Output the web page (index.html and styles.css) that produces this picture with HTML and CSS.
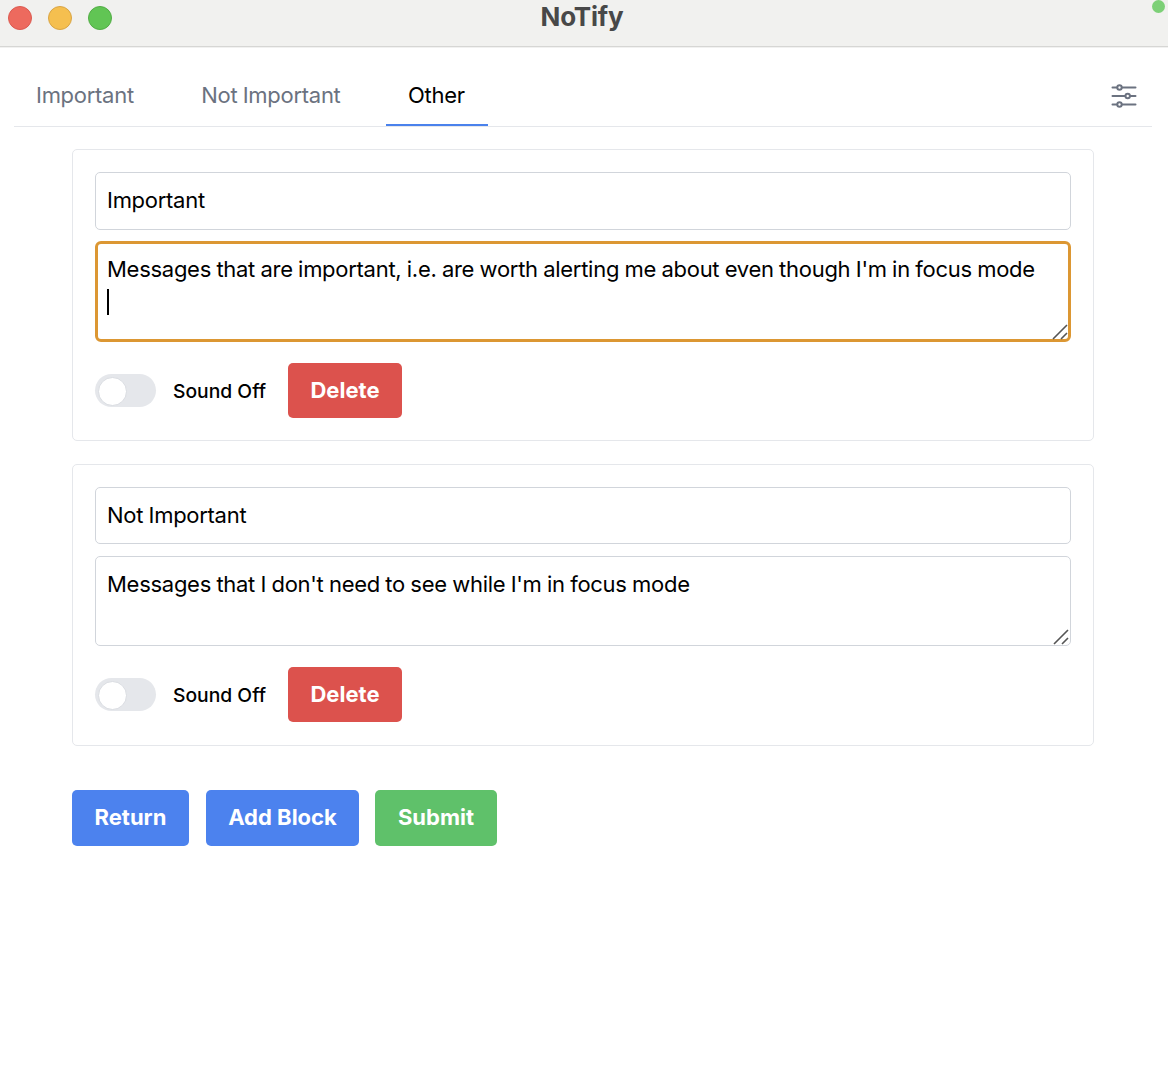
FILE: index.html
```html
<!DOCTYPE html>
<html lang="en">
<head>
<meta charset="utf-8">
<title>NoTify</title>
<link rel="stylesheet" href="styles.css">
</head>
<body>
<header class="titlebar">
  <div class="lights"><span class="light red"></span><span class="light yellow"></span><span class="light green"></span></div>
  <h1 class="title">NoTify</h1>
  <span class="status"></span>
</header>
<nav class="tabs">
  <a class="tab">Important</a>
  <a class="tab">Not Important</a>
  <a class="tab active">Other</a>
  <svg class="settings" viewBox="0 0 26 24" fill="none" stroke="#6b7280" stroke-width="2" stroke-linecap="round"><path d="M1.500 3.500h4.500M11 3.500h13.500M1.500 12h12.500M19 12h5.500M1.500 20.500h4.500M11 20.500h13.500"/><circle cx="8.500" cy="3.500" r="2.200"/><circle cx="16.700" cy="12" r="2.200"/><circle cx="8.500" cy="20.500" r="2.200"/></svg>
</nav>
<main class="content">
  <section class="card first">
    <div class="field name">Important</div>
    <div class="field area focused">Messages that are important, i.e. are worth alerting me about even though I'm in focus mode<span class="caret"></span>
      <svg class="grip" viewBox="0 0 16 16" stroke="#555" stroke-width="1.600"><path d="M1 15L15 1M9 15L15 9"/></svg></div>
    <div class="actions"><span class="toggle"></span><span class="label">Sound Off</span><button class="btn delete">Delete</button></div>
  </section>
  <section class="card second">
    <div class="field name">Not Important</div>
    <div class="field area">Messages that I don't need to see while I'm in focus mode
      <svg class="grip" viewBox="0 0 16 16" stroke="#555" stroke-width="1.600"><path d="M1 15L15 1M9 15L15 9"/></svg></div>
    <div class="actions"><span class="toggle"></span><span class="label">Sound Off</span><button class="btn delete">Delete</button></div>
  </section>
  <div class="footer"><button class="btn return">Return</button><button class="btn add">Add Block</button><button class="btn submit">Submit</button></div>
</main>
</body>
</html>
```
FILE: styles.css
```css
* { box-sizing: border-box; }
body { margin: 0; background: #fff; color: #000; font-family: Inter, "Liberation Sans", sans-serif; font-size: 22px; line-height: 33px; }
.titlebar { position: relative; height: 47px; background: #f1f1ef; border-bottom: 1px solid #d6d6d4; box-shadow: 0 1px 0 #f1f1f0; }
.lights { position: absolute; left: 8px; top: 6px; display: flex; gap: 16px; }
.light { width: 24px; height: 24px; border-radius: 50%; border: 1px solid; }
.red { background: #ed6a5e; border-color: #dc5a50; }
.yellow { background: #f5bf4f; border-color: #d9a545; }
.green { background: #61c554; border-color: #52ad45; }
.title { margin: 0; text-align: center; font-size: 26px; line-height: 34px; font-weight: 700; letter-spacing: -0.2px; color: #484848; padding-right: 4px; }
.status { position: absolute; left: 1151.500px; top: -0.500px; width: 13px; height: 13px; border-radius: 50%; background: #7dd077; }
.tabs { display: flex; height: 64px; margin: 16px 16px 0 14px; border-bottom: 1px solid #e5e7eb; letter-spacing: -0.28px; word-spacing: -0.5px; }
.tab { padding: 16px 22px 0; color: #6b7280; margin-right: 23.400px; height: 63px; white-space: nowrap; }
.tab.active { color: #000; border-bottom: 2px solid #4a82ec; width: 102px; }
.settings { width: 26px; height: 24px; margin: 20.500px 15.500px 0 auto; }
.content { padding: 22px 74px 0 72px; }
.card { border: 1px solid #e5e7eb; border-radius: 5px; padding: 22px; }
.first { height: 292px; margin-bottom: 23px; }
.second { height: 282px; }
.field { border: 1px solid #d1d5db; border-radius: 5px; padding: 11px; white-space: nowrap; position: relative; letter-spacing: -0.28px; word-spacing: -0.5px; }
.name { height: 58px; margin-bottom: 11px; }
.second .name { height: 57px; margin-bottom: 12px; }
.area { height: 90px; }
.area.focused { height: 101px; border: 3px solid #dc9733; padding: 9px; border-radius: 6px; }
.caret { position: absolute; left: 9px; top: 45px; width: 2px; height: 26px; background: #000; }
.grip { position: absolute; right: 1.500px; bottom: 0.500px; width: 16px; height: 16px; }
.focused .grip { right: 0; bottom: -1px; }
.actions { display: flex; align-items: center; margin-top: 21px; }
.toggle { width: 61px; height: 33px; border-radius: 17px; background: #e5e7eb; padding: 3px; }
.toggle::before { content: ""; display: block; width: 27px; height: 27px; border-radius: 50%; background: #fff; border: 1px solid #d9dce1; }
.label { width: 93px; margin: 0 22px 0 17px; padding-top: 2px; font-size: 19.300px; font-weight: 500; white-space: nowrap; }
.btn { border: 0; padding: 0; border-radius: 5px; color: #fff; font: 700 22px/33px Inter, "Liberation Sans", sans-serif; height: 56px; }
.delete { width: 114px; height: 55px; background: #dc524d; }
.footer { display: flex; margin-top: 44px; }
.footer .btn { padding-bottom: 2px; }
.return, .add { background: #4c82ee; }
.return { width: 117px; margin-right: 17px; }
.add { width: 153px; margin-right: 16px; }
.submit { width: 122px; background: #5fc16a; }
```
